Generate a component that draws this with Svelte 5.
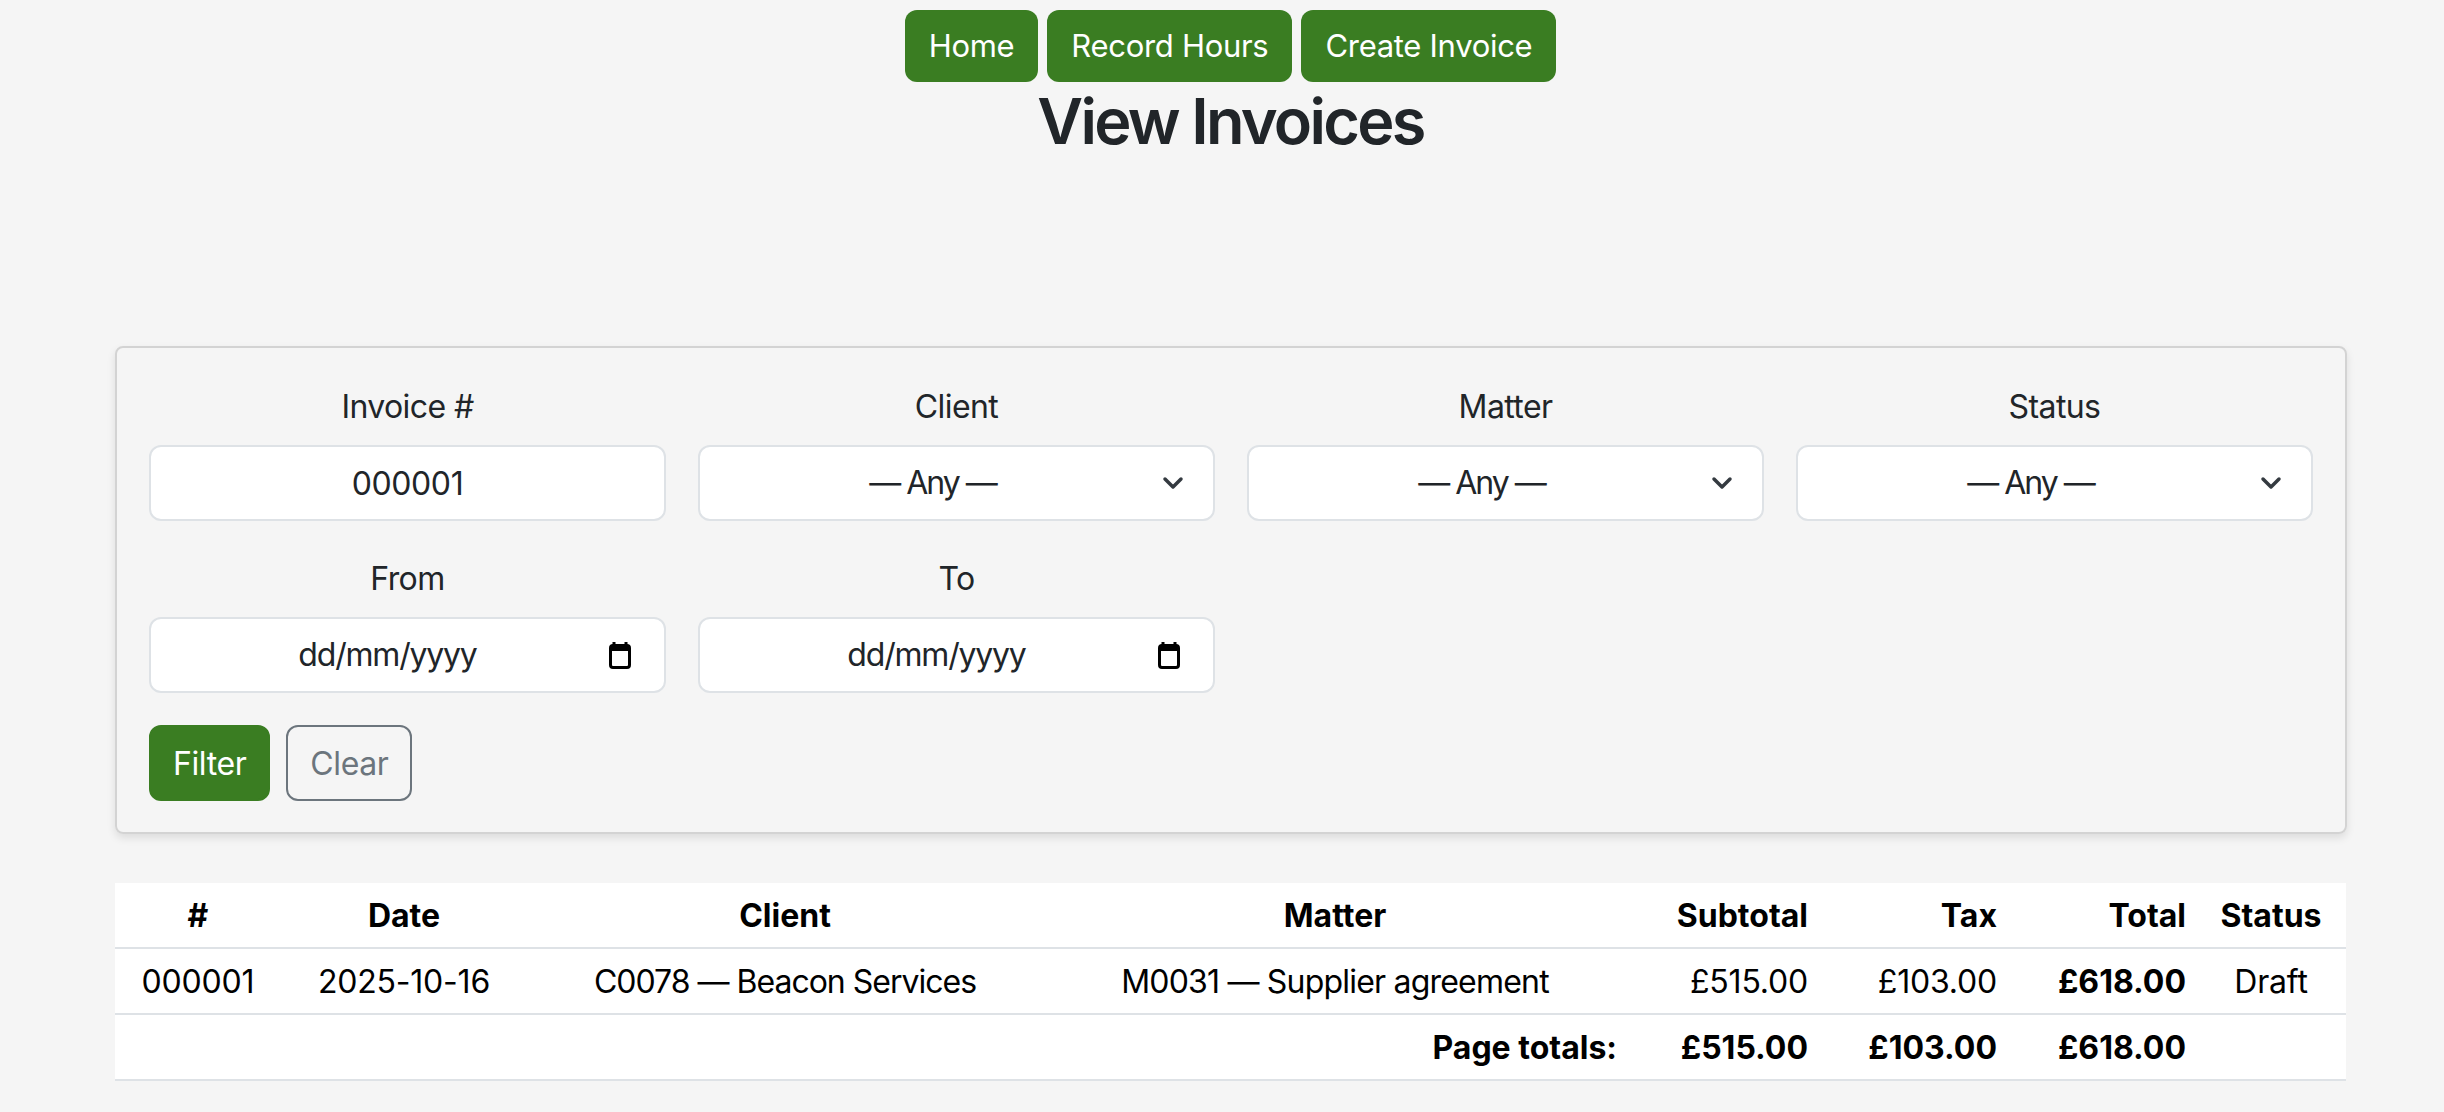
<script>
  const navLinks = ["Home", "Record Hours", "Create Invoice"];
  const selects = ["Client", "Matter", "Status"];
  const dates = ["From", "To"];
  const widths = [166, 246, 516, 584, 191, 189, 189, 150];
  const invoices = [
    { id: "000001", date: "2025-10-16", client: "C0078 — Beacon Services", matter: "M0031 — Supplier agreement", subtotal: "£515.00", tax: "£103.00", total: "£618.00", status: "Draft" }
  ];
</script>

<div class="page">
  <nav>
    {#each navLinks as link}
      <a href="#top" class="btn nav-btn">{link}</a>
    {/each}
  </nav>
  <h1>View Invoices</h1>

  <form class="card" onsubmit={(e) => e.preventDefault()}>
    <div class="fields">
      <label class="field">
        <span>Invoice #</span>
        <input class="control" type="text" value="000001" />
      </label>
      {#each selects as name}
        <label class="field">
          <span>{name}</span>
          <select class="control select">
            <option>— Any —</option>
          </select>
        </label>
      {/each}
      {#each dates as name}
        <div class="field">
          <span>{name}</span>
          <div class="control date">
            <span class="date-text">dd/mm/yyyy</span>
            <svg width="24" height="28" viewBox="0 0 24 28" aria-hidden="true">
              <path d="M6 1v4M18 1v4" stroke="#000" stroke-width="3" />
              <rect x="2.5" y="4.5" width="19" height="22" rx="2.5" fill="none" stroke="#000" stroke-width="3" />
              <rect x="2" y="4" width="20" height="6" fill="#000" />
            </svg>
          </div>
        </div>
      {/each}
    </div>
    <div class="actions">
      <button class="btn filter" type="submit">Filter</button>
      <button class="btn clear" type="button">Clear</button>
    </div>
  </form>

  <table>
    <colgroup>
      {#each widths as w}
        <col style="width: {w}px" />
      {/each}
    </colgroup>
    <thead>
      <tr>
        <th>#</th>
        <th>Date</th>
        <th>Client</th>
        <th>Matter</th>
        <th class="num">Subtotal</th>
        <th class="num">Tax</th>
        <th class="num">Total</th>
        <th>Status</th>
      </tr>
    </thead>
    <tbody>
      {#each invoices as inv}
        <tr>
          <td>{inv.id}</td>
          <td>{inv.date}</td>
          <td class="client">{inv.client}</td>
          <td class="matter">{inv.matter}</td>
          <td class="num">{inv.subtotal}</td>
          <td class="num">{inv.tax}</td>
          <td class="num strong">{inv.total}</td>
          <td>{inv.status}</td>
        </tr>
      {/each}
    </tbody>
    <tfoot>
      <tr>
        <td class="num strong" colspan="4">Page totals:</td>
        <td class="num strong">£515.00</td>
        <td class="num strong">£103.00</td>
        <td class="num strong">£618.00</td>
        <td></td>
      </tr>
    </tfoot>
  </table>
</div>

<style>
  :global(body) {
    background: #f5f5f5;
    color: #212529;
    font-family: Inter, "Liberation Sans", sans-serif;
    font-size: 32px;
    line-height: 48px;
  }

  .page {
    box-sizing: border-box;
    width: 2444px;
    padding: 10px 98px 0 115px;
    text-align: center;
  }

  nav {
    display: flex;
    justify-content: center;
    gap: 9px;
  }

  h1 {
    margin: 0 0 186px;
    padding-top: 1px;
    font-size: 63px;
    font-weight: 580;
    line-height: 77px;
    letter-spacing: -2.7px;
  }

  .btn {
    box-sizing: border-box;
    border-radius: 12px;
    font: inherit;
    letter-spacing: -0.4px;
    text-decoration: none;
  }

  .nav-btn {
    padding: 10px 24px;
    height: 72px;
    font-size: 31px;
    line-height: 52px;
    letter-spacing: -0.3px;
    background: #3a7d22;
    color: #fff;
  }

  .card {
    box-sizing: border-box;
    width: 2232px;
    padding: 33px 32px 31px;
    border: 2px solid #d3d3d3;
    border-radius: 8px;
    box-shadow: 0 4px 8px rgba(0, 0, 0, 0.1);
  }

  .fields {
    display: grid;
    grid-template-columns: repeat(4, 1fr);
    gap: 32px;
  }

  .field {
    display: block;
    letter-spacing: -0.6px;
  }

  .field > span {
    display: block;
    margin-bottom: 14px;
    padding-top: 2px;
  }

  .control {
    box-sizing: border-box;
    display: block;
    width: 100%;
    height: 76px;
    padding: 12px 24px;
    border: 2px solid #dee2e6;
    border-radius: 12px;
    background-color: #fff;
    color: #212529;
    font: inherit;
    letter-spacing: -0.4px;
    text-align: center;
  }

  .select {
    appearance: none;
    padding-right: 72px;
    letter-spacing: -2px;
    background-image: url("data:image/svg+xml,%3csvg xmlns='http://www.w3.org/2000/svg' viewBox='0 0 24 24'%3e%3cpath fill='none' stroke='%23343a40' stroke-linecap='round' stroke-linejoin='round' stroke-width='3.5' d='M4 8l8 8 8-8'/%3e%3c/svg%3e");
    background-repeat: no-repeat;
    background-position: right 28px center;
    background-size: 24px 24px;
  }

  .date {
    display: flex;
    align-items: center;
    padding-right: 32px;
  }

  .date-text {
    flex: 1;
    padding-right: 8px;
    letter-spacing: -1.2px;
  }

  .actions {
    display: flex;
    gap: 16px;
    margin-top: 32px;
  }

  .filter,
  .clear {
    height: 76px;
    padding: 13px 22px 11px;
  }

  .filter {
    border: 2px solid #3a7d22;
    background: #3a7d22;
    color: #fff;
  }

  .clear {
    border: 2px solid #6c757d;
    background: transparent;
    color: #6c757d;
  }

  table {
    width: 2231px;
    margin-top: 49px;
    border-collapse: collapse;
    table-layout: fixed;
    background: #fff;
    color: #000;
    letter-spacing: -0.2px;
  }

  th,
  td {
    box-sizing: border-box;
    height: 66px;
    padding: 9px 10px 7px;
    border-bottom: 2px solid #dee2e6;
    text-align: center;
    white-space: nowrap;
  }

  th {
    height: 65px;
  }

  th,
  .strong {
    font-weight: 700;
    letter-spacing: 0;
  }

  .num {
    text-align: right;
  }

  .client {
    letter-spacing: -1px;
  }

  .matter {
    letter-spacing: -0.8px;
  }
</style>
